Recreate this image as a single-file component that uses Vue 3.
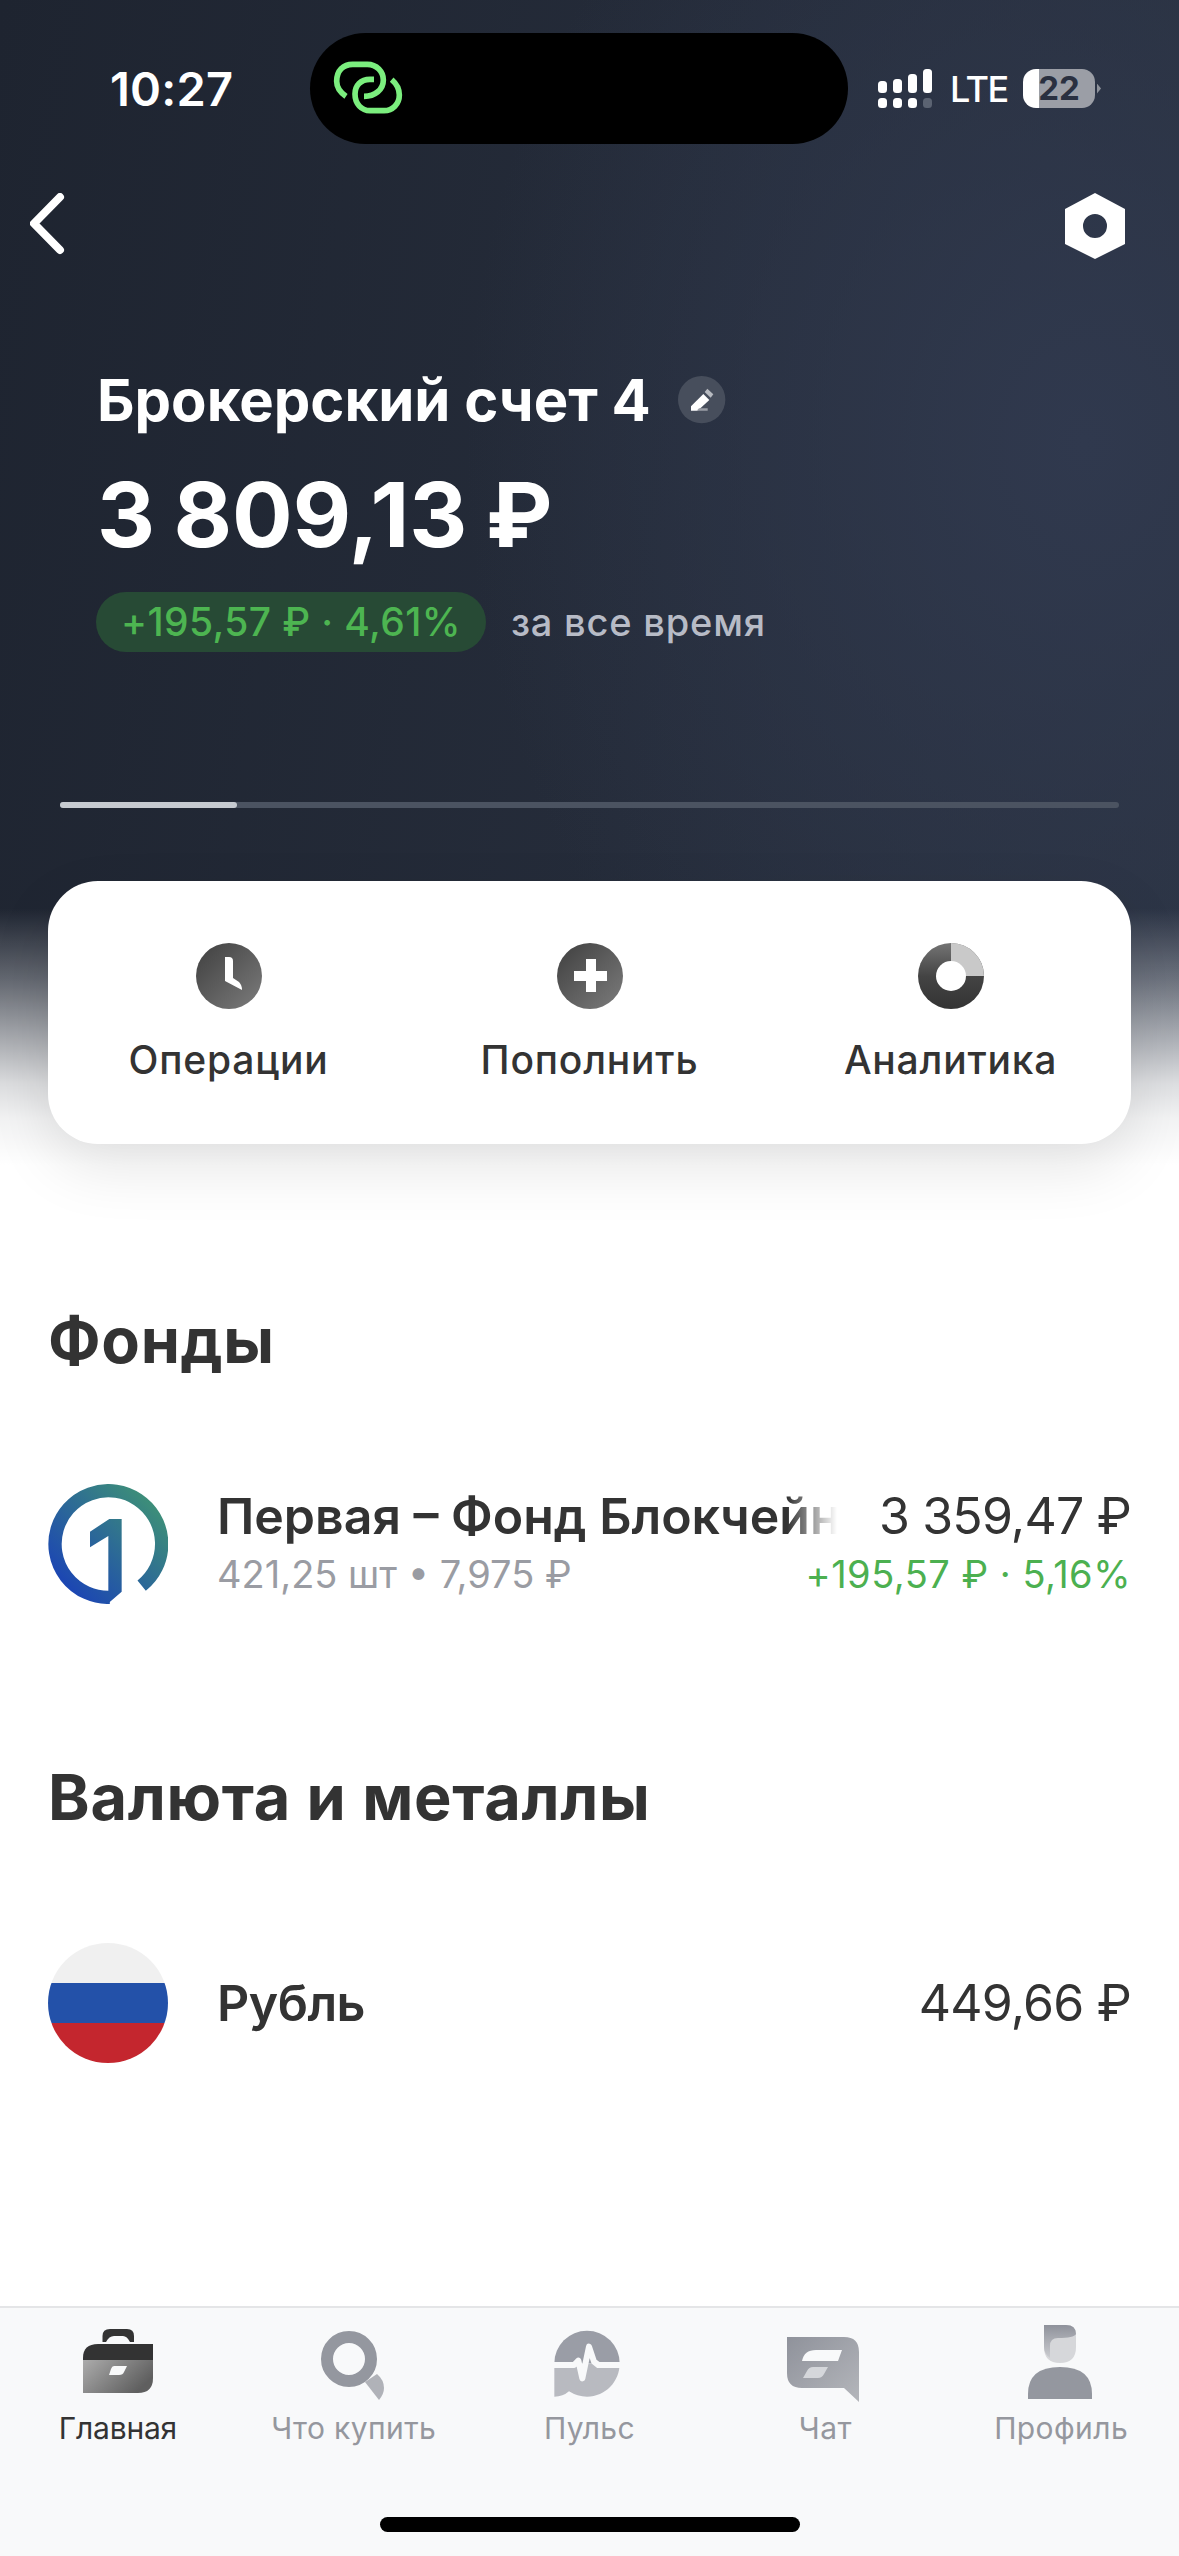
<template>
  <div class="screen">
    <div class="status">
      <span class="time">10:27</span>
      <div class="island">
        <svg width="100" height="80" viewBox="0 0 300 240" fill="none" stroke="#7bee7e" stroke-width="17">
          <path d="M78 142C60 130 50 115 50 97C50 65 70 46 98 46H142C170 46 190 68 190 93C190 122 165 142 132 142" />
          <path d="M162 91H150C122 91 105 110 105 135C105 165 125 185 150 185H192C218 185 238 165 238 138C238 118 228 103 215 92" />
        </svg>
      </div>
      <svg class="signal" width="54" height="40" viewBox="0 0 54 40" fill="#fff">
        <rect x="0" y="12" width="9" height="12" rx="3.5" />
        <rect x="15" y="10" width="9" height="14" rx="3.5" />
        <rect x="30" y="5" width="9" height="19" rx="3.5" />
        <rect x="45" y="0" width="9" height="24" rx="3.5" />
        <rect x="0" y="29" width="9" height="10" rx="3.5" />
        <rect x="15" y="29" width="9" height="10" rx="3.5" />
        <rect x="30" y="29" width="9" height="10" rx="3.5" />
        <rect x="45" y="29" width="9" height="10" rx="3.5" fill="#5b6372" />
      </svg>
      <span class="lte">LTE</span>
      <div class="battery">22</div>
      <span class="nub"></span>
    </div>

    <div class="nav">
      <svg width="40" height="66" viewBox="0 0 40 66" fill="none" stroke="#fff" stroke-width="8" stroke-linecap="round" stroke-linejoin="round">
        <path d="M30 4L4 30.500L30 57" />
      </svg>
      <svg width="60" height="66" viewBox="0 0 60 66" fill="#fff" fill-rule="evenodd">
        <path d="M30 0L60 16V51L30 66L0 51V16ZM30 21A12 12 0 1 0 30 45A12 12 0 1 0 30 21Z" />
      </svg>
    </div>

    <div class="account">
      <div class="title-row">
        <h1 class="title">Брокерский счет 4</h1>
        <svg class="edit" width="48" height="48" viewBox="49 44 144 144">
          <circle cx="120" cy="115" r="71" fill="#474e5c" />
          <path d="M88 135L125 98L143 116L108 148H88Z" fill="#fff" />
          <path d="M129 92L137 82L155 99L147 109Z" fill="#b7bac0" />
          <path d="M112 141H138V148H105Z" fill="#9a9ea6" />
        </svg>
      </div>
      <div class="amount">3 809,13 ₽</div>
      <div class="yield-row">
        <span class="pill">+195,57 ₽ · 4,61%</span>
        <span class="period">за все время</span>
      </div>
    </div>

    <div class="progress"><div class="progress-fill"></div></div>

    <div class="actions">
      <div class="action">
        <svg width="66" height="66" viewBox="0 0 66 66">
          <defs>
            <linearGradient id="ico" x1="0" y1="0" x2="1" y2="1">
              <stop offset="0" stop-color="#3f3f3f" />
              <stop offset="1" stop-color="#7c7c7c" />
            </linearGradient>
          </defs>
          <circle cx="33" cy="33" r="33" fill="url(#ico)" />
          <path d="M29 14H33Q37 14 37 18V35L43 39Q46 42 46 47L29 38Z" fill="#fff" />
        </svg>
        <span class="action-label">Операции</span>
      </div>
      <div class="action">
        <svg width="66" height="66" viewBox="0 0 66 66">
          <circle cx="33" cy="33" r="33" fill="url(#ico)" />
          <path d="M29 16H39V28H50V38H39V49H29V38H17V28H29Z" fill="#fff" />
        </svg>
        <span class="action-label">Пополнить</span>
      </div>
      <div class="action">
        <svg width="66" height="66" viewBox="0 0 66 66">
          <defs>
            <linearGradient id="donut" x1="0" y1="0" x2="0" y2="1">
              <stop offset="0" stop-color="#747474" />
              <stop offset="0.5" stop-color="#444" />
              <stop offset="1" stop-color="#333" />
            </linearGradient>
          </defs>
          <circle cx="33" cy="33" r="33" fill="url(#donut)" />
          <path d="M33 33V0A33 33 0 0 1 66 33Z" fill="#c9c9c9" />
          <circle cx="33" cy="33" r="15" fill="#fff" />
        </svg>
        <span class="action-label">Аналитика</span>
      </div>
    </div>

    <h2 class="section first">Фонды</h2>
    <div class="row fund">
      <svg class="avatar" width="120" height="120" viewBox="0 0 360 360" fill="none">
        <defs>
          <linearGradient id="logo" gradientUnits="userSpaceOnUse" x1="40" y1="320" x2="330" y2="40">
            <stop offset="0" stop-color="#1a42b6" />
            <stop offset="1" stop-color="#3f9375" />
          </linearGradient>
        </defs>
        <path d="M281 305A160 160 0 1 0 185 340" stroke="url(#logo)" stroke-width="40" />
        <path d="M126 143L184 105H221V323L181 358V156L126 190Z" fill="url(#logo)" />
      </svg>
      <div class="row-main lift">
        <div class="name fade">Первая – Фонд Блокчейн</div>
        <div class="sub">421,25 шт • 7,975 ₽</div>
      </div>
      <div class="row-side lift">
        <div class="value">3 359,47 ₽</div>
        <div class="gain">+195,57 ₽ · 5,16%</div>
      </div>
    </div>

    <h2 class="section second">Валюта и металлы</h2>
    <div class="row currency">
      <div class="flag"></div>
      <div class="row-main">
        <div class="name">Рубль</div>
      </div>
      <div class="row-side">
        <div class="value">449,66 ₽</div>
      </div>
    </div>

    <div class="tabbar">
      <div class="tabs">
        <div class="tab active">
          <svg width="90" height="84" viewBox="0 0 90 84">
            <defs>
              <linearGradient id="case" x1="0" y1="0" x2="1" y2="0.5">
                <stop offset="0" stop-color="#acacac" />
                <stop offset="1" stop-color="#5f5f5f" />
              </linearGradient>
            </defs>
            <path d="M29.5 20V14Q29.5 7 37 7H54Q61 7 61 14V20H57Q54 14 50 14H41Q36 14 33 20Z" fill="#333" />
            <path d="M10 38V36Q10 22 25 22H80V38Z" fill="#333" />
            <path d="M10 38H80V56Q80 71 65 71H10Z" fill="url(#case)" />
            <path d="M41 44H54L51 50Q50 53 46 53H36L38 47Q39 44 41 44Z" fill="#f8f9fa" />
          </svg>
          <span>Главная</span>
        </div>
        <div class="tab">
          <svg width="90" height="84" viewBox="0 0 90 84">
            <path d="M56 60L68 52Q75 58 75 66Q75 72 70 78Z" fill="#b0b2b8" />
            <circle cx="40" cy="37" r="22" fill="none" stroke="#94979f" stroke-width="12" />
          </svg>
          <span>Что купить</span>
        </div>
        <div class="tab">
          <svg width="90" height="84" viewBox="15 6 270 252">
            <path d="M46 130A98 98 0 0 1 242 130Z" fill="#9a9da6" />
            <path d="M46 130V230Q72 230 90 214Q115 230 144 230C200 230 242 185 242 130Z" fill="#b8bac0" />
            <path d="M40 135H105L118 122L130 175L150 80L165 125L178 135H250" fill="none" stroke="#f8f9fa" stroke-width="18" stroke-linejoin="round" />
          </svg>
          <span>Пульс</span>
        </div>
        <div class="tab">
          <svg width="90" height="84" viewBox="0 0 90 84">
            <defs>
              <linearGradient id="chat" x1="0" y1="0" x2="1" y2="1">
                <stop offset="0" stop-color="#8f929b" />
                <stop offset="1" stop-color="#b4b6bb" />
              </linearGradient>
            </defs>
            <path d="M7 15H64Q79 15 79 30V80L64 66H22Q7 66 7 51Z" fill="url(#chat)" />
            <path d="M62 28L58 39H22Q24 28 36 28Z" fill="#f8f9fa" />
            <path d="M48 45L44 52Q42 56 38 56H23L27 49Q29 45 33 45Z" fill="#d5d7db" />
          </svg>
          <span>Чат</span>
        </div>
        <div class="tab">
          <svg width="90" height="84" viewBox="0 0 90 84">
            <defs>
              <linearGradient id="hair" x1="0" y1="0" x2="0" y2="1">
                <stop offset="0" stop-color="#8f929b" />
                <stop offset="1" stop-color="#cbccd0" />
              </linearGradient>
            </defs>
            <path d="M28 3H50Q60 3 60 13V25Q60 41 44 41Q28 41 28 25Z" fill="#d6d7da" />
            <path d="M28 3H50Q60 3 60 12Q58 16 42 16Q34 16 34 24V36Q28 32 28 25Z" fill="url(#hair)" />
            <path d="M12 77V72Q12 45 44 45Q76 45 76 72V77Z" fill="#94979f" />
          </svg>
          <span>Профиль</span>
        </div>
      </div>
      <div class="home"></div>
    </div>
  </div>
</template>

<script setup>
</script>

<style>
html, body {
  margin: 0;
  background: #fff;
}
</style>

<style scoped>
.screen {
  width: 1179px;
  height: 2556px;
  overflow: hidden;
  display: flex;
  flex-direction: column;
  font-family: Inter, "Noto Sans", sans-serif;
  color: #333;
  background-color: #fff;
  background-image:
    linear-gradient(180deg, rgba(255, 255, 255, 0) 78%, rgba(255, 255, 255, 0.3) 84%, rgba(255, 255, 255, 0.66) 90%, rgba(255, 255, 255, 0.84) 93%, rgba(255, 255, 255, 0.94) 96%, #fff 100%),
    radial-gradient(ellipse 620px 760px at 92% 38%, #30394e 0%, rgba(48, 57, 78, 0) 100%),
    linear-gradient(100deg, #1e2430 0%, #252c3a 55%, #2b3342 100%);
  background-size: 100% 1165px;
  background-repeat: no-repeat;
}

.status {
  display: flex;
  align-items: center;
  height: 111px;
  margin-top: 33px;
  padding-left: 110px;
  color: #fff;
  flex: none;
}

.time {
  width: 200px;
  font-size: 47px;
  font-weight: 600;
  letter-spacing: 0.2px;
}

.island {
  width: 538px;
  height: 111px;
  border-radius: 56px;
  background: #000;
  display: flex;
  align-items: center;
  padding-left: 10px;
  box-sizing: border-box;
  margin-right: 30px;
}

.signal {
  margin-right: 18px;
}

.lte {
  font-size: 36px;
  font-weight: 500;
  width: 73px;
  letter-spacing: -1.5px;
}

.battery {
  width: 72px;
  height: 39px;
  border-radius: 13px;
  background: linear-gradient(90deg, #fff 22%, #9b9ea6 22%);
  color: #2a3040;
  font-size: 33px;
  font-weight: 700;
  line-height: 39px;
  text-align: center;
}

.nub {
  width: 4px;
  height: 10px;
  margin-left: 2px;
  background: #8e929b;
  clip-path: polygon(0 0, 100% 50%, 0 100%);
}

.nav {
  display: flex;
  justify-content: space-between;
  margin-top: 49px;
  padding: 0 54px 0 30px;
  height: 66px;
  flex: none;
}

.account {
  margin-top: 107px;
  padding-left: 97px;
  color: #fff;
}

.title-row {
  display: flex;
  align-items: center;
  height: 68px;
}

.title {
  margin: 0;
  font-size: 58px;
  font-weight: 700;
  line-height: 68px;
  letter-spacing: 0;
}

.edit {
  margin-left: 27px;
}

.amount {
  margin-top: 31px;
  font-size: 90px;
  font-weight: 700;
  line-height: 100px;
  word-spacing: -3px;
}

.yield-row {
  margin-top: 27px;
  display: flex;
  align-items: center;
}

.pill {
  height: 60px;
  line-height: 60px;
  margin-left: -1px;
  padding: 0 25px;
  border-radius: 30px;
  background: #274a35;
  color: #4db551;
  font-size: 39px;
  font-weight: 500;
  letter-spacing: 0.4px;
}

.period {
  margin-left: 25px;
  font-size: 38px;
  font-weight: 500;
  letter-spacing: 0.8px;
  color: #b7bbc6;
}

.progress {
  margin: 150px 0 0 60px;
  width: 1059px;
  height: 6px;
  border-radius: 3px;
  background: #4b5361;
  flex: none;
}

.progress-fill {
  width: 177px;
  height: 100%;
  border-radius: 3px;
  background: #c6cad0;
}

.actions {
  margin: 73px 48px 0;
  height: 263px;
  flex: none;
  box-sizing: border-box;
  padding-top: 62px;
  border-radius: 50px;
  background: #fff;
  box-shadow: 0 24px 60px rgba(0, 0, 0, 0.1);
  display: grid;
  grid-template-columns: repeat(3, 1fr);
}

.action {
  display: flex;
  flex-direction: column;
  align-items: center;
}

.action-label {
  margin-top: 28px;
  font-size: 39px;
  font-weight: 500;
  line-height: 46px;
  letter-spacing: 0.8px;
  color: #333;
}

.section {
  margin: 0;
  padding-left: 48px;
  font-size: 63px;
  font-weight: 700;
  line-height: 72px;
  letter-spacing: 0.7px;
  color: #333;
  flex: none;
}

.section.first {
  margin-top: 160px;
}

.section.second {
  margin-top: 157px;
}

.row {
  display: flex;
  align-items: center;
  padding: 0 48px;
  height: 120px;
  flex: none;
}

.row.fund {
  margin-top: 108px;
}

.row.currency {
  margin-top: 110px;
}

.avatar {
  flex: none;
}

.flag {
  width: 120px;
  height: 120px;
  border-radius: 50%;
  flex: none;
  background: linear-gradient(180deg, #f0f0f0 0 33%, #2351a9 33% 67%, #c4262e 67% 100%);
}

.row-main {
  margin-left: 49px;
  flex: 1;
  min-width: 0;
}

.lift {
  margin-bottom: 5px;
}

.name {
  font-size: 50px;
  font-weight: 600;
  line-height: 58px;
  letter-spacing: -0.5px;
  white-space: nowrap;
}

.name.fade {
  width: 620px;
  overflow: hidden;
  letter-spacing: 0;
  -webkit-mask-image: linear-gradient(90deg, #000 92%, transparent 100%);
  mask-image: linear-gradient(90deg, #000 92%, transparent 100%);
}

.sub {
  margin-top: 6px;
  font-size: 38px;
  line-height: 46px;
  color: #9a9ca3;
}

.row-side {
  text-align: right;
  flex: none;
}

.value {
  font-size: 50px;
  line-height: 58px;
  letter-spacing: -0.8px;
  white-space: nowrap;
}

.gain {
  margin-top: 6px;
  font-size: 38px;
  line-height: 46px;
  letter-spacing: 0.5px;
  color: #4cb050;
  white-space: nowrap;
}

.tabbar {
  margin-top: auto;
  height: 250px;
  box-sizing: border-box;
  border-top: 2px solid #e4e5e7;
  background: #f8f9fa;
  flex: none;
}

.tabs {
  display: grid;
  grid-template-columns: repeat(5, 1fr);
  padding-top: 14px;
}

.tab {
  display: flex;
  flex-direction: column;
  align-items: center;
  color: #95979e;
  font-size: 30px;
  line-height: 40px;
  letter-spacing: 0.4px;
}

.tab span {
  margin-top: 2px;
}

.tab.active {
  color: #333;
  letter-spacing: -0.2px;
}

.home {
  width: 420px;
  height: 15px;
  margin: 69px auto 0 380px;
  border-radius: 8px;
  background: #000;
}
</style>
